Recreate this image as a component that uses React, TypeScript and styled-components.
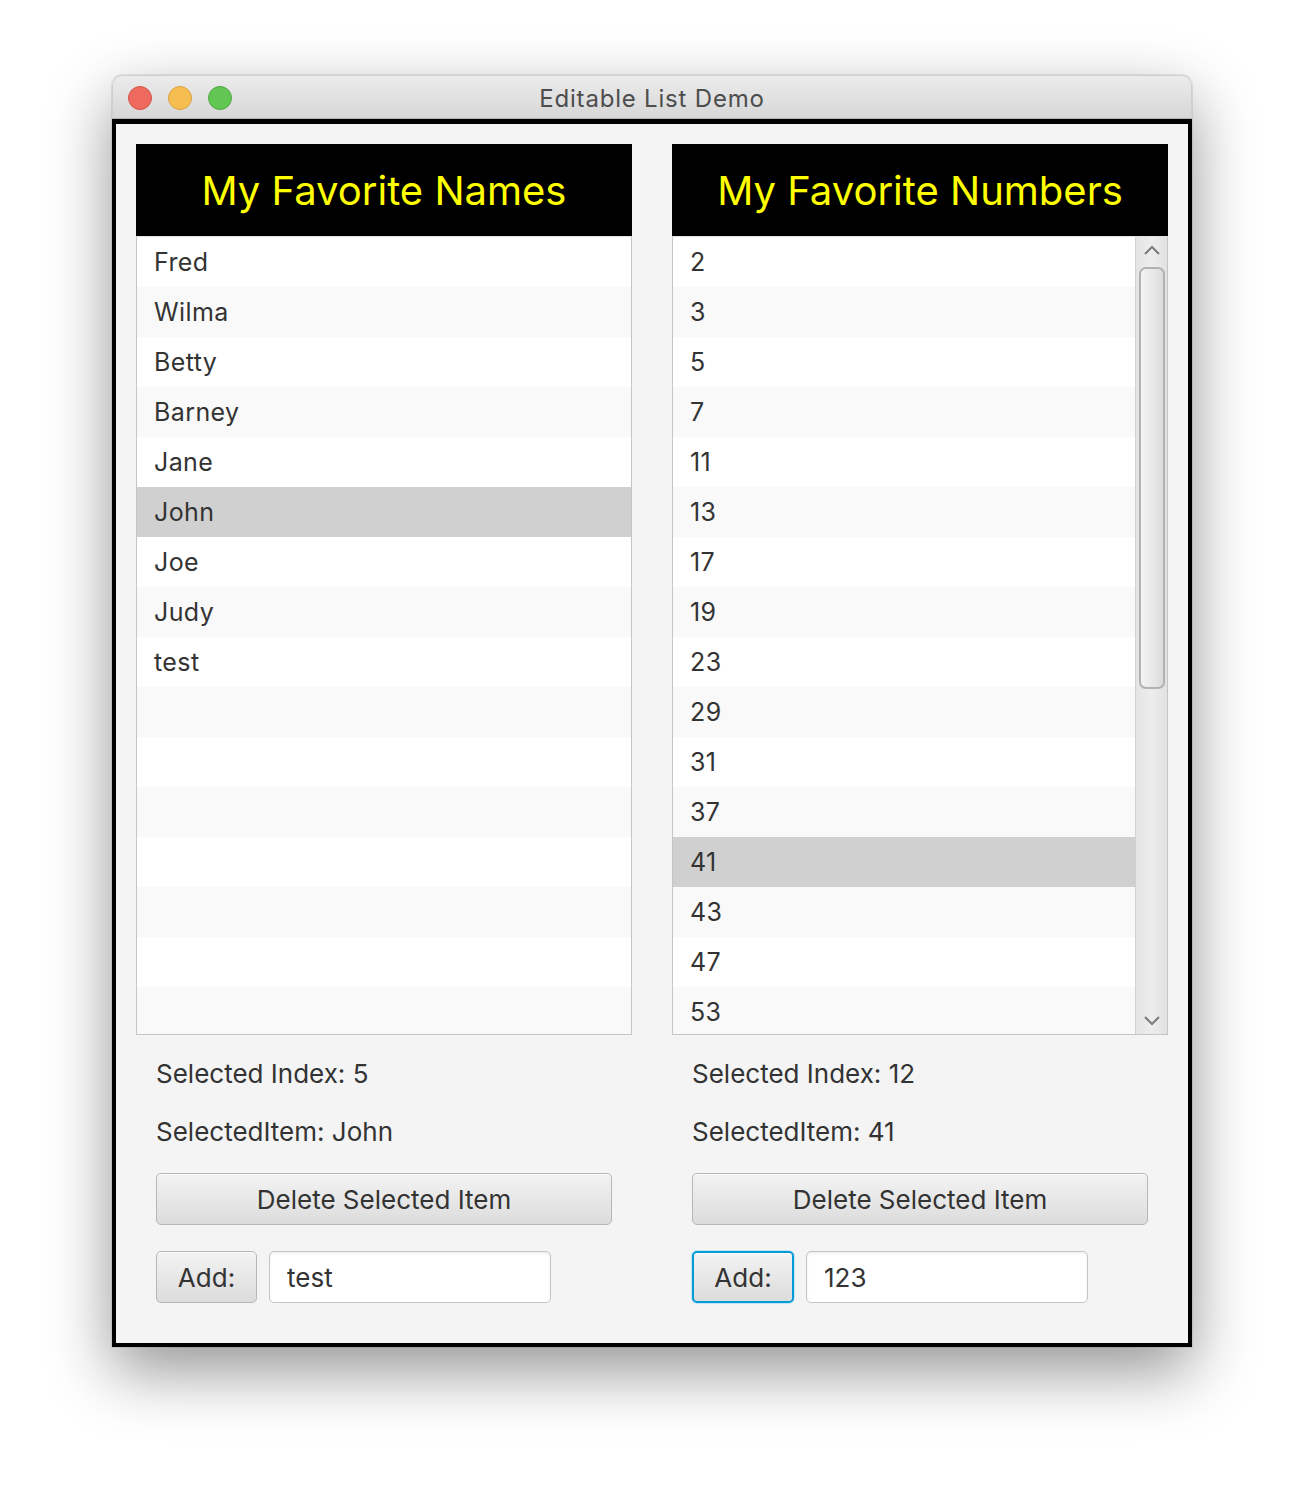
import React from 'react';
import styled, { createGlobalStyle, css } from 'styled-components';

const GlobalStyle = createGlobalStyle`
  html, body {
    margin: 0;
    padding: 0;
    background: #ffffff;
  }
  body {
    font-family: Inter, "Noto Sans", "Liberation Sans", sans-serif;
    color: #333333;
  }
`;

const Page = styled.div`
  padding: 75px 112px 150px;
`;

const Window = styled.div`
  width: 1080px;
  border-radius: 10px 10px 0 0;
  box-shadow: 0 24px 64px rgba(0, 0, 0, 0.42), 0 0 0 1px rgba(0, 0, 0, 0.08);
`;

const TitleBar = styled.div`
  height: 44px;
  box-sizing: border-box;
  display: grid;
  grid-template-columns: 1fr auto 1fr;
  align-items: center;
  padding: 0 15px;
  background: linear-gradient(#ececec, #d7d7d7);
  border: 1px solid #cfcfcf;
  border-bottom-color: #b4b4b4;
  border-radius: 10px 10px 0 0;
`;

const Lights = styled.div`
  display: flex;
  gap: 16px;
  margin-top: 2px;
`;

const Light = styled.span<{ $fill: string; $ring: string }>`
  width: 24px;
  height: 24px;
  box-sizing: border-box;
  border-radius: 50%;
  background: ${(p) => p.$fill};
  border: 1px solid ${(p) => p.$ring};
`;

const WindowTitle = styled.div`
  font-size: 24px;
  letter-spacing: 0.8px;
  color: #4d4d4d;
  margin-top: 2px;
`;

const Frame = styled.div`
  border: 4px solid #000;
  border-top-width: 5px;
  background: #f4f4f4;
  padding: 20px 20px 40px;
  display: grid;
  grid-template-columns: 496px 496px;
  column-gap: 40px;
`;

const Column = styled.section`
  display: flex;
  flex-direction: column;
`;

const Header = styled.h1`
  margin: 0;
  height: 92px;
  background: #000;
  color: #ffff00;
  font-size: 40px;
  font-weight: 400;
  display: flex;
  align-items: center;
  justify-content: center;
`;

const ListBox = styled.div`
  height: 799px;
  box-sizing: border-box;
  border: 1px solid #c6c6c6;
  border-top-color: #e2e2e2;
  background: #ffffff;
  display: flex;
  overflow: hidden;
`;

const Rows = styled.ul`
  flex: 1;
  margin: 0;
  padding: 0;
  list-style: none;
  overflow: hidden;
`;

const Row = styled.li<{ $odd: boolean; $selected: boolean }>`
  height: 50px;
  display: flex;
  align-items: center;
  padding-left: 17px;
  font-size: 25px;
  letter-spacing: 0.4px;
  color: #333;
  background: ${(p) => (p.$odd ? '#f9f9f9' : '#ffffff')};
  ${(p) =>
    p.$selected &&
    css`
      background: #d0d0d0;
    `}
`;

const ScrollBar = styled.div`
  width: 31px;
  display: flex;
  flex-direction: column;
  align-items: center;
  border-left: 1px solid #d2d2d2;
  background: linear-gradient(90deg, #e4e4e4, #ededed 50%, #e2e2e2);
`;

const Arrow = styled.div`
  height: 26px;
  width: 100%;
  display: flex;
  align-items: center;
  justify-content: center;
`;

const Track = styled.div`
  flex: 1;
  width: 100%;
  display: flex;
  flex-direction: column;
  align-items: center;
`;

const Thumb = styled.div`
  margin-top: 4px;
  width: 26px;
  height: 422px;
  box-sizing: border-box;
  border: 2px solid #b2b2b2;
  border-radius: 7px;
  background: linear-gradient(90deg, #f4f4f4, #e6e6e6 60%, #dcdcdc);
`;

const Controls = styled.div`
  padding: 20px 20px 0;
  display: flex;
  flex-direction: column;
`;

const Label = styled.div`
  height: 36px;
  display: flex;
  align-items: center;
  font-size: 26px;
  color: #333;
  & + & {
    margin-top: 22px;
  }
`;

const buttonLook = css`
  box-sizing: border-box;
  height: 52px;
  border: 1px solid #b7b7b7;
  border-radius: 5px;
  background: linear-gradient(#f3f3f3, #dcdcdc);
  box-shadow: inset 0 1px 0 rgba(255, 255, 255, 0.7);
  font-family: inherit;
  font-size: 26px;
  color: #333;
  padding: 0;
`;

const DeleteButton = styled.button`
  ${buttonLook};
  width: 100%;
  margin-top: 24px;
`;

const AddRow = styled.div`
  margin-top: 26px;
  display: flex;
  gap: 12px;
`;

const AddButton = styled.button<{ $focused?: boolean }>`
  ${buttonLook};
  width: 101px;
  ${(p) =>
    p.$focused &&
    css`
      width: 102px;
      border: 2px solid #049bd6;
      box-shadow: 0 0 0 1px #c4e5f3, inset 0 1px 0 rgba(255, 255, 255, 0.7);
    `}
`;

const TextField = styled.input`
  box-sizing: border-box;
  width: 282px;
  height: 52px;
  border: 1px solid #c4c4c4;
  border-radius: 5px;
  background: #fff;
  box-shadow: inset 0 2px 3px rgba(0, 0, 0, 0.06);
  padding: 0 17px;
  font-family: inherit;
  font-size: 26px;
  color: #333;
  outline: none;
`;

const Chevron = ({ up }: { up?: boolean }) => (
  <svg width="18" height="10" viewBox="0 0 18 10">
    <path
      d={up ? 'M2 9 L9 2 L16 9' : 'M2 1 L9 8 L16 1'}
      fill="none"
      stroke="#7b7b7b"
      strokeWidth="2"
    />
  </svg>
);

type ListProps = {
  title: string;
  items: string[];
  selected: number;
  visibleRows: number;
  scroll?: boolean;
  field: string;
  focused?: boolean;
};

const EditableList = ({ title, items, selected, visibleRows, scroll, field, focused }: ListProps) => {
  const rows = Array.from({ length: visibleRows }, (_, i) => items[i] ?? '');
  return (
    <Column>
      <Header>{title}</Header>
      <ListBox>
        <Rows>
          {rows.map((item, index) => (
            <Row key={`row-${index}`} $odd={index % 2 === 1} $selected={index === selected}>
              {item}
            </Row>
          ))}
        </Rows>
        {scroll && (
          <ScrollBar>
            <Arrow>
              <Chevron up />
            </Arrow>
            <Track>
              <Thumb />
            </Track>
            <Arrow>
              <Chevron />
            </Arrow>
          </ScrollBar>
        )}
      </ListBox>
      <Controls>
        <Label>{`Selected Index: ${selected}`}</Label>
        <Label>{`SelectedItem: ${items[selected]}`}</Label>
        <DeleteButton>Delete Selected Item</DeleteButton>
        <AddRow>
          <AddButton $focused={focused}>Add:</AddButton>
          <TextField defaultValue={field} readOnly />
        </AddRow>
      </Controls>
    </Column>
  );
};

const names = ['Fred', 'Wilma', 'Betty', 'Barney', 'Jane', 'John', 'Joe', 'Judy', 'test'];
const primes = ['2', '3', '5', '7', '11', '13', '17', '19', '23', '29', '31', '37', '41', '43', '47', '53'];

const App = () => {
  return (
    <Page>
      <GlobalStyle />
      <Window>
        <TitleBar>
          <Lights>
            <Light $fill="#ee6a5f" $ring="#d5554b" />
            <Light $fill="#f6be50" $ring="#d9a23f" />
            <Light $fill="#62c655" $ring="#4fa842" />
          </Lights>
          <WindowTitle>Editable List Demo</WindowTitle>
          <div />
        </TitleBar>
        <Frame>
          <EditableList title="My Favorite Names" items={names} selected={5} visibleRows={16} field="test" />
          <EditableList
            title="My Favorite Numbers"
            items={primes}
            selected={12}
            visibleRows={16}
            scroll
            field="123"
            focused
          />
        </Frame>
      </Window>
    </Page>
  );
};

export default App;
